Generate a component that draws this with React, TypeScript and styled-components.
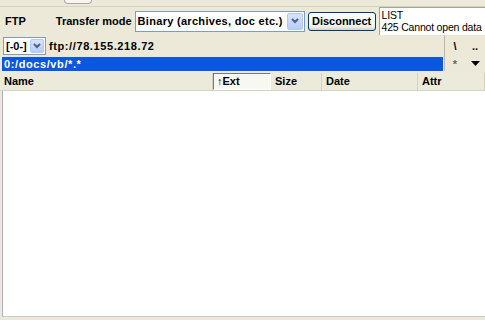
import React from 'react'
import styled, { createGlobalStyle } from 'styled-components'

const GlobalStyle = createGlobalStyle`
  html, body {
    margin: 0;
    padding: 0;
    width: 485px;
    height: 320px;
    overflow: hidden;
    background: #ece9d8;
    font-family: 'Liberation Sans', Arial, sans-serif;
    font-size: 11px;
    color: #000;
  }
`

const Window = styled.div`
  width: 485px;
  height: 320px;
  display: flex;
  flex-direction: column;
  background: #ece9d8;
`

const TopStrip = styled.div`
  height: 6px;
  border-bottom: 1px solid #d8d2bd;
  display: flex;
  padding-left: 64px;
`

const StripTab = styled.div`
  width: 26px;
  height: 3px;
  border: 1px solid #a9a7a0;
  border-top: none;
  border-radius: 0 0 4px 4px;
  background: #f7f6f1;
`

const ControlRow = styled.div`
  height: 28px;
  display: flex;
  align-items: center;
`

const Label = styled.span<{ $left?: number; $wide?: boolean }>`
  font-weight: bold;
  margin-left: ${({ $left }) => $left ?? 0}px;
  letter-spacing: ${({ $wide }) => ($wide ? '0.6px' : 'normal')};
  white-space: nowrap;
`

const Combo = styled.div<{ $width: number; $height: number; $left: number }>`
  width: ${({ $width }) => $width}px;
  height: ${({ $height }) => $height}px;
  margin-left: ${({ $left }) => $left}px;
  box-sizing: border-box;
  border: 1px solid #7f9db9;
  background: #fff;
  display: flex;
  align-items: center;
  flex-shrink: 0;
`

const ComboText = styled.span<{ $spacing?: number }>`
  flex: 1;
  padding-left: 2px;
  font-weight: bold;
  letter-spacing: ${({ $spacing }) => $spacing ?? 0.3}px;
  white-space: nowrap;
  overflow: hidden;
`

const DropButton = styled.div<{ $w?: number }>`
  width: ${({ $w }) => $w ?? 16}px;
  flex-shrink: 0;
  align-self: stretch;
  margin: 1px;
  border-radius: 2px;
  background: linear-gradient(#d6e3fd, #b9cdf7);
  border: 1px solid #b4c8f4;
  box-sizing: border-box;
  display: flex;
  align-items: center;
  justify-content: center;
`

const Chevron = () => (
  <svg width="8" height="6" viewBox="0 0 8 6">
    <path d="M1 1 L4 4 L7 1" stroke="#4d6185" strokeWidth="2" fill="none" />
  </svg>
)

const XPButton = styled.button`
  margin-left: 3px;
  width: 68px;
  height: 19px;
  padding: 0;
  border: 1px solid #003c74;
  border-radius: 3px;
  background: linear-gradient(#ffffff, #f0f0ea 80%, #d6d0c5);
  font-family: inherit;
  font-size: 11px;
  font-weight: bold;
  color: #000;
  flex-shrink: 0;
`

const LogBox = styled.div`
  margin-left: 3px;
  align-self: stretch;
  flex: 1;
  min-width: 0;
  background: #fff;
  border-left: 1px solid #a5a39a;
  border-top: 1px solid #a5a39a;
  padding: 1px 0 0 2px;
  font-size: 10.5px;
  line-height: 12px;
  letter-spacing: -0.2px;
  white-space: nowrap;
  overflow: hidden;
`

const AddressArea = styled.div`
  display: flex;
  height: 36px;
`

const AddressMain = styled.div`
  width: 443px;
  display: flex;
  flex-direction: column;
`

const DriveRow = styled.div`
  height: 22px;
  display: flex;
  align-items: center;
`

const PathBar = styled.div`
  margin: 0 0 0 2px;
  height: 14px;
  background: #0a58e1;
  color: #fff;
  font-weight: bold;
  letter-spacing: 0.6px;
  padding-left: 2px;
  line-height: 14px;
`

const SidePanel = styled.div`
  flex: 1;
  border-left: 1px solid #bdb9a8;
  margin-left: 1px;
  display: grid;
  grid-template-columns: 1fr 1fr;
  grid-template-rows: 22px 14px;
  align-items: center;
  justify-items: center;
`

const SideGlyph = styled.span<{ $dim?: boolean }>`
  font-weight: bold;
  font-size: 11px;
  line-height: 1;
  color: ${({ $dim }) => ($dim ? '#666' : '#000')};
`

const HeaderRow = styled.div`
  margin-top: 2px;
  height: 17px;
  display: flex;
  background: #ebeadb;
  border-bottom: 1px solid #d6d2c2;
`

const HeaderCell = styled.div<{ $width: number; $active?: boolean }>`
  width: ${({ $width }) => $width}px;
  flex-shrink: 0;
  box-sizing: border-box;
  padding-left: ${({ $active }) => ($active ? 3 : 4)}px;
  font-weight: bold;
  line-height: 16px;
  border-right: 1px solid #d6d2c2;
  ${({ $active }) =>
    $active &&
    `
    background: #f8f8f3;
    border: 1px solid #7a786f;
    border-right-color: #fff;
    border-bottom-color: #fff;
    line-height: 14px;
  `}
`

const ListArea = styled.div`
  margin: 0 0 3px 2px;
  flex: 1;
  background: #fff;
  border-left: 1px solid #a8b1c0;
  border-bottom: 1px solid #c8cdd5;
`

export default function App() {
  return (
    <Window>
      <GlobalStyle />
      <TopStrip>
        <StripTab />
      </TopStrip>
      <ControlRow>
        <Label $left={5}>FTP</Label>
        <Label $left={30}>Transfer mode</Label>
        <Combo $width={170} $height={21} $left={3}>
          <ComboText>Binary (archives, doc etc.)</ComboText>
          <DropButton>
            <Chevron />
          </DropButton>
        </Combo>
        <XPButton>Disconnect</XPButton>
        <LogBox>
          LIST
          <br />
          425 Cannot open data
        </LogBox>
      </ControlRow>
      <AddressArea>
        <AddressMain>
          <DriveRow>
            <Combo $width={43} $height={18} $left={3}>
              <ComboText $spacing={0}>[-0-]</ComboText>
              <DropButton $w={14}>
                <Chevron />
              </DropButton>
            </Combo>
            <Label $left={3} $wide>ftp://78.155.218.72</Label>
          </DriveRow>
          <PathBar>0:/docs/vb/*.*</PathBar>
        </AddressMain>
        <SidePanel>
          <SideGlyph>\</SideGlyph>
          <SideGlyph>..</SideGlyph>
          <SideGlyph $dim>*</SideGlyph>
          <svg width="9" height="6" viewBox="0 0 9 6">
            <path d="M0 0 H9 L4.5 5 Z" fill="#000" />
          </svg>
        </SidePanel>
      </AddressArea>
      <HeaderRow>
        <HeaderCell $width={213}>Name</HeaderCell>
        <HeaderCell $width={58} $active>↑Ext</HeaderCell>
        <HeaderCell $width={51}>Size</HeaderCell>
        <HeaderCell $width={96}>Date</HeaderCell>
        <HeaderCell $width={67}>Attr</HeaderCell>
      </HeaderRow>
      <ListArea />
    </Window>
  )
}
